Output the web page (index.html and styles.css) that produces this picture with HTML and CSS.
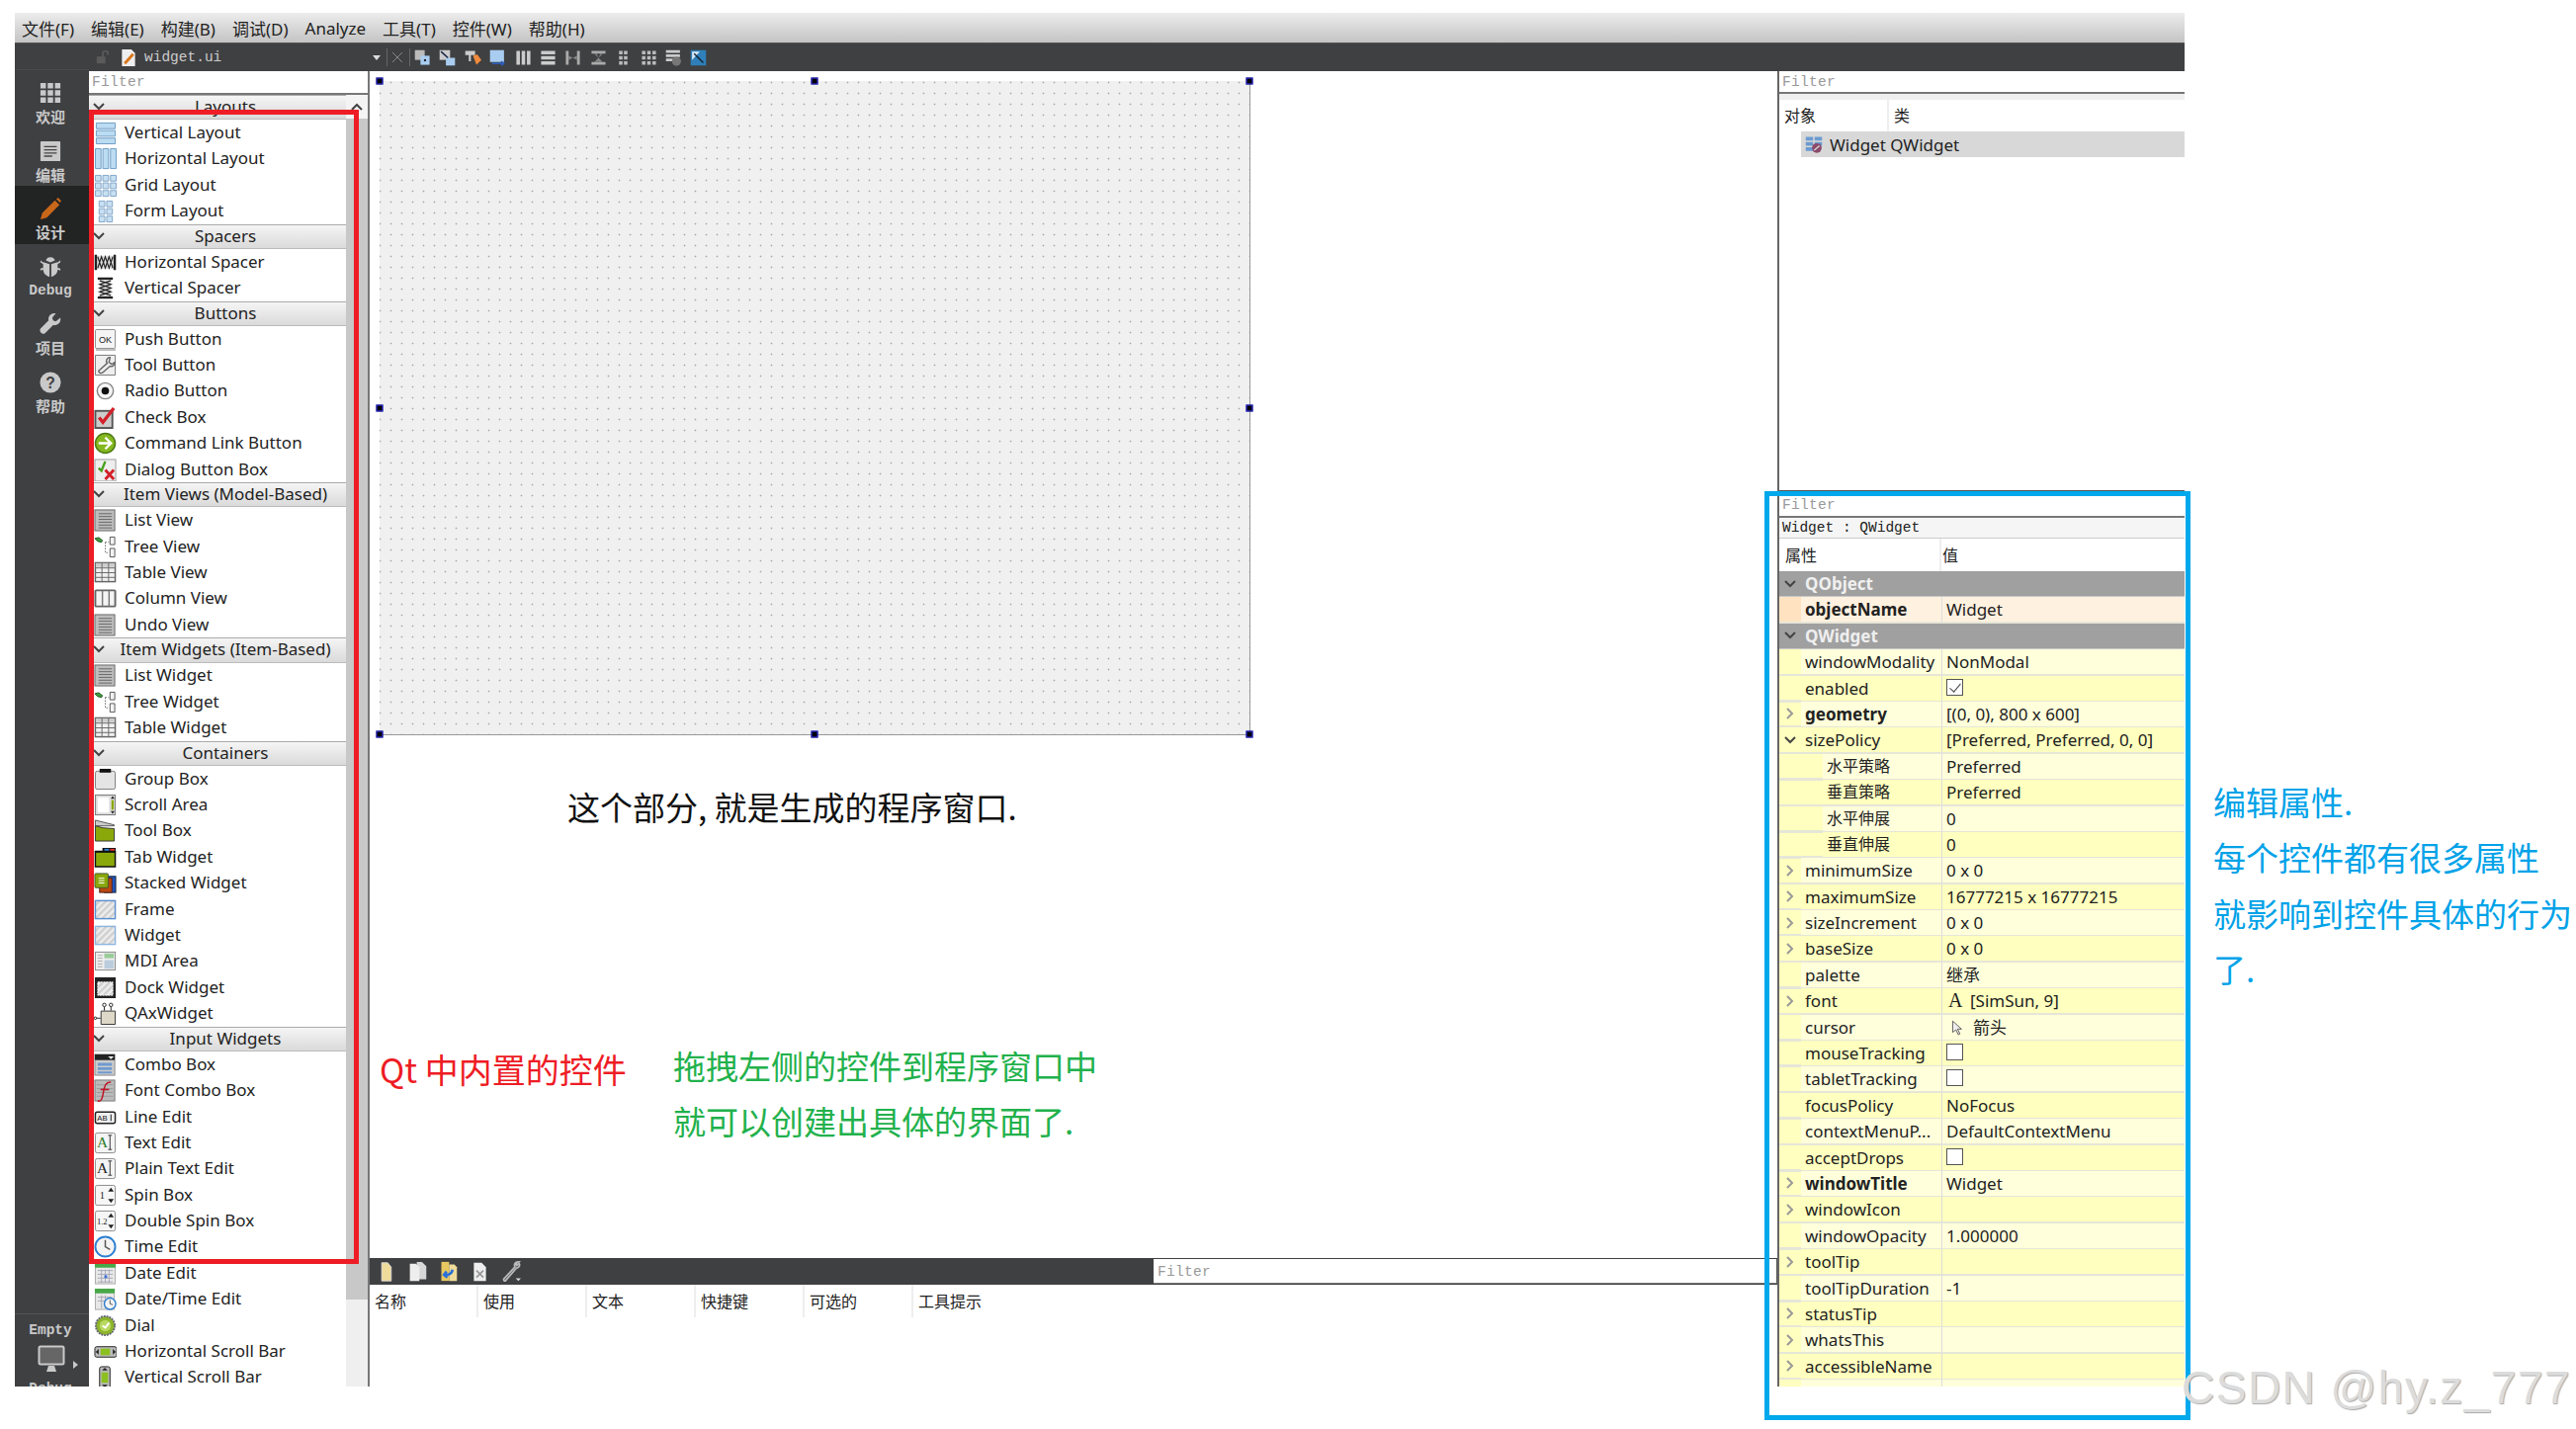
FILE: index.html
```html
<!DOCTYPE html>
<html lang="zh-CN">

<head>
    <meta charset="UTF-8">
    <title>Qt Designer widget.ui</title>
    <link rel="stylesheet" href="styles.css">
</head>

<body>
    <!-- icon sprite -->
    <svg class="sprite" xmlns="http://www.w3.org/2000/svg">
        <!-- sidebar -->
        <symbol id="s-welcome" viewBox="0 0 24 24"><path fill="#c9c9c9" d="M1 1h6v6H1zM9 1h6v6H9zM17 1h6v6h-6zM1 9h6v6H1zM9 9h6v6H9zM17 9h6v6h-6zM1 17h6v6H1zM9 17h6v6H9zM17 17h6v6h-6z"/></symbol>
        <symbol id="s-edit" viewBox="0 0 24 24"><rect x="1" y="1" width="22" height="22" rx="1" fill="#c9c9c9"/><path stroke="#444" stroke-width="1.5" d="M5 7h14M5 10.5h14M5 14h14M5 17.5h9"/></symbol>
        <symbol id="s-design" viewBox="0 0 24 24"><path fill="#c8661a" d="M1 24l2-7L17 3l5 5L8 22zM18.500 1.500l2-1.500 3.500 3.500-1.500 2z"/></symbol>
        <symbol id="s-debug" viewBox="0 0 24 24"><path fill="#c9c9c9" d="M7 5c1-5 9-5 10 0l-5 2zM5 7l6 2v14c-4-1-7-4-7-8l-3 1v-2l3-1V9L1 7V5l3 2zM19 7l-6 2v14c4-1 7-4 7-8l3 1v-2l-3-1V9l3-2V5l-3 2z"/></symbol>
        <symbol id="s-tool" viewBox="0 0 24 24"><path fill="#c9c9c9" d="M23 5l-5 4-3-1-1-3 4-5c-5-.5-9 3-8 8L1 17c-2 3 2 7 5 5l9-9c5 1 9-3 8-8z"/></symbol>
        <symbol id="s-monitor" viewBox="0 0 28 28"><rect x="1.500" y="1.500" width="25" height="18" rx="1.500" fill="#666" stroke="#c9c9c9" stroke-width="2"/><path fill="#c9c9c9" d="M11 21h6l2 6H9z"/></symbol>
        <!-- widget box -->
        <symbol id="vlay" viewBox="0 0 24 24"><path fill="#bcdcf2" stroke="#6c9cc4" d="M2.500 1.500h20v6h-20zM2.500 9.500h20v6h-20zM2.500 17.500h20v6h-20z"/></symbol>
        <symbol id="hlay" viewBox="0 0 24 24"><path fill="#bcdcf2" stroke="#6c9cc4" d="M1.500 1.500h6v21h-6zM9.500 1.500h6v21h-6zM17.500 1.500h6v21h-6z"/></symbol>
        <symbol id="glay" viewBox="0 0 24 24"><path fill="#c9e0f2" stroke="#7fa5c8" d="M1.500 1.500h6v6h-6zM9.500 1.500h6v6h-6zM17.500 1.500h6v6h-6zM1.500 9.500h6v6h-6zM9.500 9.500h6v6h-6zM17.500 9.500h6v6h-6zM1.500 17.500h6v6h-6zM9.500 17.500h6v6h-6zM17.500 17.500h6v6h-6z"/></symbol>
        <symbol id="flay" viewBox="0 0 24 24"><path fill="#c9e0f2" stroke="#7fa5c8" d="M5.500 1.500h6v6h-6zM13.500 1.500h6v6h-6zM5.500 9.500h6v6h-6zM13.500 9.500h6v6h-6zM5.500 17.500h6v6h-6zM13.500 17.500h6v6h-6z"/></symbol>
        <symbol id="hspc" viewBox="0 0 24 24"><path fill="#aaa" d="M3 5h18v14H3z" opacity=".4"/><path fill="none" stroke="#222" stroke-width="2.500" d="M2 4v16M22 4v16"/><path fill="none" stroke="#222" stroke-width="1.200" d="M4 6l4 12 4-12 4 12 4-12M4 18l4-12 4 12 4-12 4 12"/></symbol>
        <symbol id="vspc" viewBox="0 0 24 24"><path fill="#aaa" d="M6 3h12v18H6z" opacity=".4"/><path fill="none" stroke="#222" stroke-width="2.500" d="M4 2h16M4 22h16"/><path fill="none" stroke="#222" stroke-width="1.200" d="M6 4l12 4-12 4 12 4-12 4M18 4L6 8l12 4-12 4 12 4"/></symbol>
        <symbol id="tbtn" viewBox="0 0 24 24"><path fill="#eee" stroke="#777" d="M1.500 1.500h21v21h-21z"/><path fill="none" stroke="#666" stroke-width="1.500" d="M17 4c-3 0-5 3-3 6L5 18c0 2 2 3 4 2l8-7c3 1 5-1 5-4l-3 2-3-2z"/></symbol>
        <symbol id="radio" viewBox="0 0 24 24"><circle cx="12" cy="12" r="8.500" fill="#f6f6f6" stroke="#888" stroke-width="1.500"/><circle cx="12" cy="12" r="4" fill="#111"/></symbol>
        <symbol id="chk" viewBox="0 0 24 24"><rect x="1.500" y="5" width="18" height="18" fill="#ccc" stroke="#555" stroke-width="2"/><path fill="none" stroke="#d3202a" stroke-width="3.500" d="M5.500 12l4 5L21 2"/></symbol>
        <symbol id="cmd" viewBox="0 0 24 24"><circle cx="12" cy="12" r="10.500" fill="#84b821" stroke="#4d7a14" stroke-width="1.500"/><path fill="none" stroke="#fff" stroke-width="2.500" d="M5 12h13M12 6l6 6-6 6"/></symbol>
        <symbol id="dlg" viewBox="0 0 24 24"><rect x="1" y="1" width="22" height="23" fill="#eee" stroke="#999"/><path fill="none" stroke="#48a020" stroke-width="2.500" d="M5 10l3 3 4-10"/><path fill="none" stroke="#d3202a" stroke-width="3" d="M12 12l9 10M21 12l-9 10"/></symbol>
        <symbol id="list" viewBox="0 0 24 24"><rect x="1" y="1" width="21" height="22" fill="#bdbdbd" stroke="#666"/><path stroke="#666" d="M5 5h14M5 8h14M5 11h14M5 14h14M5 17h14M5 20h14"/></symbol>
        <symbol id="tree" viewBox="0 0 24 24"><path fill="#3fa03f" stroke="#225522" d="M1 3l4-1 4 3-1 2-4-1z"/><path fill="none" stroke="#666" stroke-dasharray="1.500 1.500" d="M12 7v11h4M12 7h4"/><path fill="#f4f4f4" stroke="#555" d="M17 1.500h5v8h-5zM17 13.500h5v9h-5z"/></symbol>
        <symbol id="tbl" viewBox="0 0 24 24"><rect x="1.500" y="1.500" width="21" height="20" fill="#f0f0f0" stroke="#666" stroke-width="1.500"/><path fill="#ccc" d="M2 2h20v4H2z"/><path stroke="#666" d="M2 7h20M2 12h20M2 17h20M8.500 2v20M15.500 2v20"/></symbol>
        <symbol id="col" viewBox="0 0 24 24"><rect x="1.500" y="3.500" width="21" height="17" rx="1" fill="#f4f4f4" stroke="#666" stroke-width="2"/><path stroke="#777" stroke-width="1.500" d="M9 4v16M16 4v16"/></symbol>
        <symbol id="group" viewBox="0 0 24 24"><rect x="1.500" y="3.500" width="21" height="19" rx="2" fill="#e4e4e4" stroke="#777"/><path fill="#111" d="M6 1h12v4H6z"/></symbol>
        <symbol id="scroll" viewBox="0 0 24 24"><rect x="1.500" y="1.500" width="21" height="21" fill="#ddd" stroke="#777"/><path fill="#fff" d="M4 4h12v16H4z"/><path fill="#8aa80a" d="M18.500 7h2.500v10h-2.500z"/><path fill="#222" d="M19.800 2.500l2 3h-4zM19.800 21.500l2-3h-4z"/></symbol>
        <symbol id="tbox" viewBox="0 0 24 24"><path fill="#ccc" stroke="#555" d="M1.500 1v6h20V6z"/><path fill="#8aa80a" stroke="#333" d="M1.500 7l8 2 12 1v13h-20z"/></symbol>
        <symbol id="tabw" viewBox="0 0 24 24"><path fill="#8aa80a" stroke="#111" stroke-width="1.500" d="M1.500 6h21v16h-21z"/><path fill="#111" d="M1 5h8V2h14v5H1z"/><path fill="#2f86d8" d="M11 3h5v2h-5z"/><path fill="#d33" d="M17 3h5v2h-5z"/></symbol>
        <symbol id="stack" viewBox="0 0 24 24"><rect x="11" y="5" width="12" height="17" fill="#1f55c0" stroke="#123"/><rect x="6" y="7" width="13" height="15" fill="#b8480e" stroke="#522"/><rect x="1" y="2" width="14" height="15" rx="1" fill="#8aa80a" stroke="#453"/><path stroke="#fff" d="M5 7h6M5 9.500h6M5 12h6"/></symbol>
        <pattern id="hatch" width="5" height="5" patternUnits="userSpaceOnUse" patternTransform="rotate(45)"><rect width="5" height="5" fill="#eee"/><rect width="2.500" height="5" fill="#cfcfcf"/></pattern>
        <symbol id="frame" viewBox="0 0 24 24"><rect x="1.500" y="2.500" width="21" height="19" fill="url(#hatch)" stroke="#5b8fd0" stroke-width="1.500"/></symbol>
        <symbol id="wdgt" viewBox="0 0 24 24"><rect x="1.500" y="2.500" width="21" height="19" fill="url(#hatch)" stroke="#8fb4e0" stroke-width="1.500"/></symbol>
        <symbol id="mdi" viewBox="0 0 24 24"><rect x="1.500" y="2.500" width="21" height="19" fill="#eee" stroke="#888"/><path fill="#9c9" d="M11 4h10v5H11z"/><path fill="#bcd" d="M11 11h10v9H11z"/><path stroke="#aaa" d="M4 6h5M4 9h5M4 12h5M4 15h5M4 18h5"/></symbol>
        <symbol id="dock" viewBox="0 0 24 24"><rect x="1" y="1" width="22" height="22" fill="#222"/><rect x="4" y="6" width="16" height="14" fill="url(#hatch)" stroke="#fff" stroke-dasharray="2 1"/></symbol>
        <symbol id="qax" viewBox="0 0 24 24"><path fill="#ddd8c8" stroke="#333" d="M7.500 9.500h15v14h-15z"/><path fill="none" stroke="#222" d="M11 9V5M18 9V5M1 17h6"/><circle cx="11" cy="3" r="1.800" fill="#fff" stroke="#222"/><circle cx="18" cy="3" r="1.800" fill="#fff" stroke="#222"/><circle cx="1.500" cy="17" r="1.300" fill="#fff" stroke="#222"/></symbol>
        <symbol id="combo" viewBox="0 0 24 24"><rect x="1" y="1" width="21" height="22" fill="#ccc" stroke="#888"/><path fill="#222" d="M1 1h21v6H1z"/><path fill="#fff" d="M15 3h6l-3 3z"/><path fill="#6f9ad0" d="M4 10h15v3H4zM4 14.500h15v3H4zM4 19h15v2H4z"/></symbol>
        <symbol id="fcombo" viewBox="0 0 24 24"><rect x="1" y="1" width="21" height="22" fill="#bbb" stroke="#777"/><path stroke="#999" d="M3 6h17M3 10h17M3 14h17M3 18h17"/><path fill="none" stroke="#c01020" stroke-width="1.500" d="M4 23c4 1 5-3 6-9s2-11 8-11M7 11h9"/></symbol>
        <symbol id="time" viewBox="0 0 24 24"><circle cx="12" cy="12" r="10.500" fill="#f4f4f4" stroke="#2f7fd0" stroke-width="2"/><path fill="none" stroke="#555" stroke-width="1.500" d="M12 5v7l5 3"/></symbol>
        <symbol id="date" viewBox="0 0 24 24"><rect x="1.500" y="2" width="21" height="21" fill="#e8e8e8" stroke="#aaa"/><path fill="#48a848" d="M1 1h22v5H1z"/><path stroke="#a8a8b8" d="M4 9h16M4 13h16M4 17h16M4 21h16M8 8v14M12 8v14M16 8v14"/><path fill="#3a6fd8" d="M11 14h3v3h-3z"/></symbol>
        <symbol id="dtime" viewBox="0 0 24 24"><rect x="1.500" y="2" width="20" height="21" fill="#e8e8e8" stroke="#aaa"/><path fill="#48a848" d="M1 1h21v5H1z"/><path stroke="#a8a8b8" d="M4 10h15M4 14h15M8 8v14M12 8v14"/><circle cx="17" cy="17" r="6" fill="#f4f4f4" stroke="#2f7fd0" stroke-width="1.500"/><path fill="none" stroke="#555" d="M17 13v4l3 1"/></symbol>
        <symbol id="dial" viewBox="0 0 24 24"><circle cx="12" cy="12" r="10" fill="#8db52a" stroke="#667" stroke-width="2" stroke-dasharray="2 1"/><circle cx="12" cy="12" r="6" fill="#b8d860"/><path fill="none" stroke="#fff" stroke-width="2" d="M9 12l3 2 4-5"/></symbol>
        <symbol id="hsb" viewBox="0 0 24 24"><rect x="1" y="7" width="23" height="11" rx="2" fill="#bbb" stroke="#222"/><path fill="#8cc020" d="M7 9h10v7H7z"/><path fill="#222" d="M2 12.500l3-3v6zM23 12.500l-3-3v6z"/></symbol>
        <symbol id="vsb" viewBox="0 0 24 24"><rect x="6" y="1" width="11" height="23" rx="2" fill="#bbb" stroke="#222"/><path fill="#8cc020" d="M8 7h7v11H8z"/><path fill="#222" d="M11.500 2l3 3h-6zM11.500 23l3-3h-6z"/></symbol>
        <!-- toolbar -->
        <symbol id="t-a" viewBox="0 0 24 24"><path fill="#bbb" d="M1 1h14v14H1z"/><path fill="#a8cdf0" d="M9 9h13v13H9z"/><path fill="#223" d="M14 14h3v3h-3z"/></symbol>
        <symbol id="t-b" viewBox="0 0 24 24"><path fill="#ccc" d="M1 1h15v14H1z"/><path fill="#a8cdf0" d="M10 12h13v11H10z"/><path stroke="#124" stroke-width="2" d="M3 3l10 9"/></symbol>
        <symbol id="t-c" viewBox="0 0 24 24"><path fill="#ccc" d="M1 2h14v6H9v9H6V8H1z"/><path fill="#f08a3c" d="M12 9l6-2 6 8-7 7z"/></symbol>
        <symbol id="t-d" viewBox="0 0 24 24"><path fill="#a8cdf0" d="M1 1h20v17H1z"/><path fill="none" stroke="#2a60c0" stroke-width="2" d="M4 20h16M17 17l4 3-4 3"/></symbol>
        <symbol id="t-e" viewBox="0 0 24 24"><path fill="#ccc" d="M2 2h5v20H2zM9.500 2h5v20h-5zM17 2h5v20h-5z"/></symbol>
        <symbol id="t-f" viewBox="0 0 24 24"><path fill="#ccc" d="M2 2h20v5H2zM2 9.500h20v5H2zM2 17h20v5H2z"/></symbol>
        <symbol id="t-g" viewBox="0 0 24 24"><path fill="#aaa" d="M2 2h4v20H2zM18 2h4v20h-4z"/><path fill="#888" d="M6 9l6 3 6-3v6l-6-3-6 3z"/></symbol>
        <symbol id="t-h" viewBox="0 0 24 24"><path fill="#aaa" d="M2 2h20v4H2zM2 18h20v4H2z"/><path fill="#888" d="M9 6l3 6 3-6h3l-6 6 6 6H6l6-6-6-6z"/></symbol>
        <symbol id="t-i" viewBox="0 0 24 24"><path fill="#bbb" d="M6 2h5v5H6zM13 2h5v5h-5zM6 9.500h5v5H6zM13 9.500h5v5h-5zM6 17h5v5H6zM13 17h5v5h-5z"/></symbol>
        <symbol id="t-j" viewBox="0 0 24 24"><path fill="#bbb" d="M2 2h5v5H2zM9.500 2h5v5h-5zM17 2h5v5h-5zM2 9.500h5v5H2zM9.500 9.500h5v5h-5zM17 9.500h5v5h-5zM2 17h5v5H2zM9.500 17h5v5h-5zM17 17h5v5h-5z"/></symbol>
        <symbol id="t-k" viewBox="0 0 24 24"><path fill="#ccc" d="M1 1h20v4H1zM1 7h20v4H1zM1 13h12v4H1z"/><circle cx="16" cy="17" r="6.500" fill="#777"/></symbol>
        <symbol id="t-l" viewBox="0 0 24 24"><path fill="#2f7fb8" d="M1 1h22v22H1z"/><path fill="#d8e8f4" d="M3 3h11L3 15z"/><path stroke="#123" stroke-width="2" d="M6 6l13 13"/></symbol>
        <!-- action editor -->
        <symbol id="a-new" viewBox="0 0 24 24"><path fill="#f0dc9a" stroke="#ddd" d="M7 2h7l4 5v16H7z"/></symbol>
        <symbol id="a-copy" viewBox="0 0 24 24"><path fill="#d8d8d8" d="M11 1h6l5 5v15H11z"/><path fill="#eee" d="M3 3h7l4 4v16H3z"/></symbol>
        <symbol id="a-paste" viewBox="0 0 24 24"><path fill="#e8c860" d="M4 1h9v22H4z"/><path fill="#f0dc9a" d="M13 4h6l3 3v16h-9z"/><path fill="none" stroke="#2a70d8" stroke-width="3" d="M17 10c-1 5-5 6-8 6M10 12l-3 4 4 3"/></symbol>
        <symbol id="a-del" viewBox="0 0 24 24"><path fill="#eee" d="M5 2h9l5 5v16H5z"/><path stroke="#999" stroke-width="2" d="M8 11l8 8M16 11l-8 8"/></symbol>
        <symbol id="a-wrench" viewBox="0 0 24 24"><path fill="none" stroke="#bbb" stroke-width="2" d="M21 1c-4 0-5 3-4 6L4 21c0 2 1 2 2 2L19 8c3 0 4-3 3-5l-3 2-1-2z"/><path fill="#ddd" d="M18 20h6l-3 3z"/></symbol>
        <symbol id="o-widget" viewBox="0 0 24 24"><path fill="#6b9bd1" d="M1 2h10v5H1zM13 2h10v5H13zM1 9h10v5H1zM13 9h10v5H13zM1 16h10v5H1z"/><circle cx="16" cy="17" r="6.500" fill="#8b4a6b"/><path stroke="#ddd" stroke-width="1.500" d="M12.500 20l7-6"/></symbol>
        <symbol id="cv" viewBox="0 0 12 12"><path fill="none" stroke="#444" stroke-width="2" d="M1 3l5 5 5-5"/></symbol>
        <symbol id="cr" viewBox="0 0 12 12"><path fill="none" stroke="#999" stroke-width="2" d="M3 1l5 5-5 5"/></symbol>
        <symbol id="cu" viewBox="0 0 12 12"><path fill="none" stroke="#444" stroke-width="2" d="M1 9l5-5 5 5"/></symbol>
        <symbol id="cursor" viewBox="0 0 16 20"><path fill="#eee" stroke="#444" d="M3 1v14l4-3 3 6 2-1-3-6h5z"/></symbol>
    </svg>

    <div class="page">
        <div class="app">
            <div class="menubar">
                <span>文件(F)</span>
                <span>编辑(E)</span>
                <span>构建(B)</span>
                <span>调试(D)</span>
                <span>Analyze</span>
                <span>工具(T)</span>
                <span>控件(W)</span>
                <span>帮助(H)</span>
            </div>

            <div class="app_body">
                <div class="sidebar">
                    <div class="side_top"></div>
                    <div class="side_item"><svg class="side_ico"><use href="#s-welcome"/></svg>欢迎</div>
                    <div class="side_item"><svg class="side_ico"><use href="#s-edit"/></svg>编辑</div>
                    <div class="side_item on"><svg class="side_ico"><use href="#s-design"/></svg>设计</div>
                    <div class="side_item"><svg class="side_ico"><use href="#s-debug"/></svg><b>Debug</b></div>
                    <div class="side_item"><svg class="side_ico"><use href="#s-tool"/></svg>项目</div>
                    <div class="side_item"><svg class="side_ico" viewBox="0 0 24 24"><circle cx="12" cy="12" r="11.500" fill="#c9c9c9"/><text x="12" y="18" text-anchor="middle" font-family="Liberation Sans" font-weight="700" font-size="17" fill="#3f4042">?</text></svg>帮助</div>
                    <div class="side_kit">
                        <b>Empty</b>
                        <div class="kit_icon"><svg class="kit_monitor"><use href="#s-monitor"/></svg><i class="kit_arrow"></i></div>
                        <b>Debug</b>
                    </div>
                </div>

                <div class="workspace">
                    <div class="doc_bar">
                        <svg class="lock" viewBox="0 0 16 16"><path fill="#5a5a5a" d="M1 7h10v8H1z"/><path fill="none" stroke="#5a5a5a" stroke-width="2" d="M8 7V3c0-3 6-3 6 0v2"/></svg>
                        <svg class="doc_file" viewBox="0 0 16 20"><path fill="#eee" d="M1 1h10l4 4v14H1z"/><path stroke="#d8761c" stroke-width="3" d="M4 16L13 6"/></svg>
                        <span class="doc_name">widget.ui</span>
                        <i class="doc_drop"></i>
                        <i class="doc_sep"></i>
                        <svg class="doc_close" viewBox="0 0 12 12"><path stroke="#888" d="M1 1l10 10M11 1L1 11"/></svg>
                        <i class="doc_sep"></i>
                        <div class="doc_tools">
                            <svg><use href="#t-a"/></svg>
                            <svg><use href="#t-b"/></svg>
                            <svg><use href="#t-c"/></svg>
                            <svg><use href="#t-d"/></svg>
                            <svg><use href="#t-e"/></svg>
                            <svg><use href="#t-f"/></svg>
                            <svg><use href="#t-g"/></svg>
                            <svg><use href="#t-h"/></svg>
                            <svg><use href="#t-i"/></svg>
                            <svg><use href="#t-j"/></svg>
                            <svg><use href="#t-k"/></svg>
                            <svg><use href="#t-l"/></svg>
                        </div>
                    </div>

                    <div class="panels">
                        <div class="widget_box">
                            <div class="filter box_filter">Filter</div>
                            <div class="box_body">
                                <div class="box_list">
                                    <div class="cat first"><svg class="cat_arrow"><use href="#cv"/></svg>Layouts</div>
                                    <div class="tool"><svg class="ico"><use href="#vlay"/></svg>Vertical Layout</div>
                                    <div class="tool"><svg class="ico"><use href="#hlay"/></svg>Horizontal Layout</div>
                                    <div class="tool"><svg class="ico"><use href="#glay"/></svg>Grid Layout</div>
                                    <div class="tool"><svg class="ico"><use href="#flay"/></svg>Form Layout</div>
                                    <div class="cat"><svg class="cat_arrow"><use href="#cv"/></svg>Spacers</div>
                                    <div class="tool"><svg class="ico"><use href="#hspc"/></svg>Horizontal Spacer</div>
                                    <div class="tool"><svg class="ico"><use href="#vspc"/></svg>Vertical Spacer</div>
                                    <div class="cat"><svg class="cat_arrow"><use href="#cv"/></svg>Buttons</div>
                                    <div class="tool"><svg class="ico" viewBox="0 0 24 24"><rect x="1.500" y="1.500" width="21" height="20" rx="1.500" fill="#f4f4f4" stroke="#888"/><path stroke="#bbb" stroke-width="2" d="M2 23h21"/><text x="12" y="15.500" text-anchor="middle" font-family="Liberation Sans" font-size="9.500" fill="#222">OK</text></svg>Push Button</div>
                                    <div class="tool"><svg class="ico"><use href="#tbtn"/></svg>Tool Button</div>
                                    <div class="tool"><svg class="ico"><use href="#radio"/></svg>Radio Button</div>
                                    <div class="tool"><svg class="ico"><use href="#chk"/></svg>Check Box</div>
                                    <div class="tool"><svg class="ico"><use href="#cmd"/></svg>Command Link Button</div>
                                    <div class="tool"><svg class="ico"><use href="#dlg"/></svg>Dialog Button Box</div>
                                    <div class="cat"><svg class="cat_arrow"><use href="#cv"/></svg>Item Views (Model-Based)</div>
                                    <div class="tool"><svg class="ico"><use href="#list"/></svg>List View</div>
                                    <div class="tool"><svg class="ico"><use href="#tree"/></svg>Tree View</div>
                                    <div class="tool"><svg class="ico"><use href="#tbl"/></svg>Table View</div>
                                    <div class="tool"><svg class="ico"><use href="#col"/></svg>Column View</div>
                                    <div class="tool"><svg class="ico"><use href="#list"/></svg>Undo View</div>
                                    <div class="cat"><svg class="cat_arrow"><use href="#cv"/></svg>Item Widgets (Item-Based)</div>
                                    <div class="tool"><svg class="ico"><use href="#list"/></svg>List Widget</div>
                                    <div class="tool"><svg class="ico"><use href="#tree"/></svg>Tree Widget</div>
                                    <div class="tool"><svg class="ico"><use href="#tbl"/></svg>Table Widget</div>
                                    <div class="cat"><svg class="cat_arrow"><use href="#cv"/></svg>Containers</div>
                                    <div class="tool"><svg class="ico"><use href="#group"/></svg>Group Box</div>
                                    <div class="tool"><svg class="ico"><use href="#scroll"/></svg>Scroll Area</div>
                                    <div class="tool"><svg class="ico"><use href="#tbox"/></svg>Tool Box</div>
                                    <div class="tool"><svg class="ico"><use href="#tabw"/></svg>Tab Widget</div>
                                    <div class="tool"><svg class="ico"><use href="#stack"/></svg>Stacked Widget</div>
                                    <div class="tool"><svg class="ico"><use href="#frame"/></svg>Frame</div>
                                    <div class="tool"><svg class="ico"><use href="#wdgt"/></svg>Widget</div>
                                    <div class="tool"><svg class="ico"><use href="#mdi"/></svg>MDI Area</div>
                                    <div class="tool"><svg class="ico"><use href="#dock"/></svg>Dock Widget</div>
                                    <div class="tool"><svg class="ico"><use href="#qax"/></svg>QAxWidget</div>
                                    <div class="cat"><svg class="cat_arrow"><use href="#cv"/></svg>Input Widgets</div>
                                    <div class="tool"><svg class="ico"><use href="#combo"/></svg>Combo Box</div>
                                    <div class="tool"><svg class="ico"><use href="#fcombo"/></svg>Font Combo Box</div>
                                    <div class="tool"><svg class="ico" viewBox="0 0 24 24"><rect x="1.500" y="6.500" width="21" height="12" rx="2" fill="#eee" stroke="#222" stroke-width="1.500"/><text x="3.500" y="15.500" font-family="Liberation Sans" font-size="8" fill="#111">AB</text><path stroke="#111" d="M18 9v7"/></svg>Line Edit</div>
                                    <div class="tool"><svg class="ico" viewBox="0 0 24 24"><rect x="1.500" y="1.500" width="21" height="21" rx="2" fill="#f4f4f4" stroke="#888"/><text x="3" y="17" font-family="Liberation Serif" font-size="16" fill="#2b7a2b">A</text><path stroke="#333" d="M17 4v15M15 4h4M15 19h4"/></svg>Text Edit</div>
                                    <div class="tool"><svg class="ico" viewBox="0 0 24 24"><rect x="1.500" y="1.500" width="21" height="21" rx="2" fill="#f4f4f4" stroke="#888"/><text x="3" y="17" font-family="Liberation Serif" font-size="16" fill="#222">A</text><path stroke="#333" d="M17 4v15M15 4h4M15 19h4"/></svg>Plain Text Edit</div>
                                    <div class="tool"><svg class="ico" viewBox="0 0 24 24"><rect x="1.500" y="1.500" width="21" height="21" rx="2" fill="#f6f6f6" stroke="#888"/><text x="6" y="16" font-family="Liberation Serif" font-size="11" fill="#222">1</text><path fill="#222" d="M18 4l3 4h-6zM18 20l3-4h-6z"/></svg>Spin Box</div>
                                    <div class="tool"><svg class="ico" viewBox="0 0 24 24"><rect x="1.500" y="1.500" width="21" height="21" rx="2" fill="#f6f6f6" stroke="#888"/><text x="3" y="16" font-family="Liberation Serif" font-size="9" fill="#222">1.2</text><path fill="#222" d="M18 4l3 4h-6zM18 20l3-4h-6z"/></svg>Double Spin Box</div>
                                    <div class="tool"><svg class="ico"><use href="#time"/></svg>Time Edit</div>
                                    <div class="tool"><svg class="ico"><use href="#date"/></svg>Date Edit</div>
                                    <div class="tool"><svg class="ico"><use href="#dtime"/></svg>Date/Time Edit</div>
                                    <div class="tool"><svg class="ico"><use href="#dial"/></svg>Dial</div>
                                    <div class="tool"><svg class="ico"><use href="#hsb"/></svg>Horizontal Scroll Bar</div>
                                    <div class="tool"><svg class="ico"><use href="#vsb"/></svg>Vertical Scroll Bar</div>
                                </div>
                                <div class="box_scroll">
                                    <div class="scroll_up"><svg><use href="#cu"/></svg></div>
                                    <div class="scroll_thumb"></div>
                                </div>
                            </div>
                        </div>

                        <div class="center">
                            <div class="design">
                                <div class="form">
                                    <i class="handle h_tl"></i><i class="handle h_tc"></i><i class="handle h_tr"></i>
                                    <i class="handle h_ml"></i><i class="handle h_mr"></i>
                                    <i class="handle h_bl"></i><i class="handle h_bc"></i><i class="handle h_br"></i>
                                </div>
                                <p class="caption">这个部分, 就是生成的程序窗口.</p>
                                <div class="notes">
                                    <p class="note_red">Qt 中内置的控件</p>
                                    <div class="note_green">
                                        <p>拖拽左侧的控件到程序窗口中</p>
                                        <p>就可以创建出具体的界面了.</p>
                                    </div>
                                </div>
                            </div>

                            <div class="actions">
                                <div class="action_bar">
                                    <div class="action_tools">
                                        <svg><use href="#a-new"/></svg>
                                        <svg><use href="#a-copy"/></svg>
                                        <svg><use href="#a-paste"/></svg>
                                        <svg><use href="#a-del"/></svg>
                                        <svg><use href="#a-wrench"/></svg>
                                    </div>
                                    <div class="filter action_filter">Filter</div>
                                </div>
                                <div class="action_head">
                                    <div>名称</div>
                                    <div>使用</div>
                                    <div>文本</div>
                                    <div>快捷键</div>
                                    <div>可选的</div>
                                    <div>工具提示</div>
                                </div>
                            </div>
                        </div>

                        <div class="right">
                            <div class="inspector">
                                <div class="filter">Filter</div>
                                <div class="ins_strip"></div>
                                <div class="ins_head"><div>对象</div><div>类</div></div>
                                <div class="ins_row"><svg class="ins_ico"><use href="#o-widget"/></svg><span>Widget QWidget</span></div>
                            </div>

                            <div class="props">
                                <div class="filter">Filter</div>
                                <div class="prop_title">Widget : QWidget</div>
                                <div class="prop_head"><div>属性</div><div>值</div></div>
                                <div class="prop_rows">
                                    <div class="prow group"><svg class="arrow"><use href="#cv"/></svg><div>QObject</div></div>
                                    <div class="prow name_row"><i></i><div class="pname bold">objectName</div><div class="pval">Widget</div></div>
                                    <div class="prow group"><svg class="arrow"><use href="#cv"/></svg><div>QWidget</div></div>
                                    <div class="prow"><i></i><div class="pname">windowModality</div><div class="pval">NonModal</div></div>
                                    <div class="prow"><i></i><div class="pname">enabled</div><div class="pval"><span class="cbox checked"></span></div></div>
                                    <div class="prow"><svg class="arrow"><use href="#cr"/></svg><div class="pname bold">geometry</div><div class="pval">[(0, 0), 800 x 600]</div></div>
                                    <div class="prow"><svg class="arrow"><use href="#cv"/></svg><div class="pname">sizePolicy</div><div class="pval">[Preferred, Preferred, 0, 0]</div></div>
                                    <div class="prow sub"><i></i><div class="pname">水平策略</div><div class="pval">Preferred</div></div>
                                    <div class="prow sub"><i></i><div class="pname">垂直策略</div><div class="pval">Preferred</div></div>
                                    <div class="prow sub"><i></i><div class="pname">水平伸展</div><div class="pval">0</div></div>
                                    <div class="prow sub"><i></i><div class="pname">垂直伸展</div><div class="pval">0</div></div>
                                    <div class="prow"><svg class="arrow"><use href="#cr"/></svg><div class="pname">minimumSize</div><div class="pval">0 x 0</div></div>
                                    <div class="prow"><svg class="arrow"><use href="#cr"/></svg><div class="pname">maximumSize</div><div class="pval">16777215 x 16777215</div></div>
                                    <div class="prow"><svg class="arrow"><use href="#cr"/></svg><div class="pname">sizeIncrement</div><div class="pval">0 x 0</div></div>
                                    <div class="prow"><svg class="arrow"><use href="#cr"/></svg><div class="pname">baseSize</div><div class="pval">0 x 0</div></div>
                                    <div class="prow"><i></i><div class="pname">palette</div><div class="pval">继承</div></div>
                                    <div class="prow"><svg class="arrow"><use href="#cr"/></svg><div class="pname">font</div><div class="pval"><span class="font_a">A</span>[SimSun, 9]</div></div>
                                    <div class="prow"><i></i><div class="pname">cursor</div><div class="pval"><svg class="cur_ico"><use href="#cursor"/></svg>箭头</div></div>
                                    <div class="prow"><i></i><div class="pname">mouseTracking</div><div class="pval"><span class="cbox"></span></div></div>
                                    <div class="prow"><i></i><div class="pname">tabletTracking</div><div class="pval"><span class="cbox"></span></div></div>
                                    <div class="prow"><i></i><div class="pname">focusPolicy</div><div class="pval">NoFocus</div></div>
                                    <div class="prow"><i></i><div class="pname">contextMenuP...</div><div class="pval">DefaultContextMenu</div></div>
                                    <div class="prow"><i></i><div class="pname">acceptDrops</div><div class="pval"><span class="cbox"></span></div></div>
                                    <div class="prow"><svg class="arrow"><use href="#cr"/></svg><div class="pname bold">windowTitle</div><div class="pval">Widget</div></div>
                                    <div class="prow"><svg class="arrow"><use href="#cr"/></svg><div class="pname">windowIcon</div><div class="pval"></div></div>
                                    <div class="prow"><i></i><div class="pname">windowOpacity</div><div class="pval">1.000000</div></div>
                                    <div class="prow"><svg class="arrow"><use href="#cr"/></svg><div class="pname">toolTip</div><div class="pval"></div></div>
                                    <div class="prow"><i></i><div class="pname">toolTipDuration</div><div class="pval">-1</div></div>
                                    <div class="prow"><svg class="arrow"><use href="#cr"/></svg><div class="pname">statusTip</div><div class="pval"></div></div>
                                    <div class="prow"><svg class="arrow"><use href="#cr"/></svg><div class="pname">whatsThis</div><div class="pval"></div></div>
                                    <div class="prow"><svg class="arrow"><use href="#cr"/></svg><div class="pname">accessibleName</div><div class="pval"></div></div>
                                    <div class="prow"><svg class="arrow"><use href="#cr"/></svg><div class="pname">accessibleD...</div><div class="pval"></div></div>
                                </div>
                            </div>
                        </div>
                    </div>
                </div>
            </div>
        </div>

        <div class="side_note">
            <p>编辑属性.</p>
            <p>每个控件都有很多属性</p>
            <p>就影响到控件具体的行为</p>
            <p>了.</p>
        </div>

        <!-- 标注框 -->
        <div class="mark_red"></div>
        <div class="mark_blue"></div>
        <div class="watermark">CSDN @hy.z_777</div>
    </div>
</body>

</html>
```

FILE: styles.css
```css
* {
    margin: 0;
    padding: 0;
    box-sizing: border-box;
}

html,
body {
    height: 100%;
    background: #fff;
    overflow: hidden;
}

body {
    font-family: "Noto Sans", "Noto Sans CJK SC", sans-serif;
    font-size: 17px;
    color: #222;
}

i {
    display: block;
}

.sprite {
    position: absolute;
    width: 0;
    height: 0;
}

.page {
    position: relative;
    display: flex;
    width: 2606px;
    height: 1446px;
    padding: 13px 0 0 15px;
}

.app {
    display: flex;
    flex-direction: column;
    flex: none;
    width: 2195px;
    height: 1390px;
    overflow: hidden;
}

/* menu */
.menubar {
    display: flex;
    flex: none;
    gap: 17px;
    align-items: center;
    height: 31px;
    padding-left: 7px;
    background: linear-gradient(#ececec, #c4c4c4);
    border-bottom: 1px solid #555;
    white-space: nowrap;
}

.app_body {
    display: flex;
    flex: 1;
    min-height: 0;
}

/* sidebar */
.sidebar {
    display: flex;
    flex: none;
    flex-direction: column;
    width: 75px;
    padding-right: 3px;
    background: #3f4042;
    color: #c9c9c9;
    font-size: 15px;
    font-weight: 700;
    overflow: hidden;
}

.side_top {
    flex: none;
    height: 27px;
    margin-right: -3px;
    border-bottom: 1px solid #4a4b4d;
}

.side_item {
    display: flex;
    flex: none;
    flex-direction: column;
    align-items: center;
    height: 58.600px;
    padding-top: 12px;
    line-height: 22px;
}

.side_item.on {
    margin-right: -3px;
    padding-right: 3px;
    background: #222323;
}

.side_ico {
    flex: none;
    width: 22px;
    height: 22px;
    margin-bottom: 2px;
}

.sidebar b {
    font-family: "Liberation Mono", monospace;
    font-size: 14.500px;
}

.side_kit {
    display: flex;
    flex-direction: column;
    align-items: center;
    margin: auto -3px 0 0;
    padding: 6px 3px 0 0;
    height: 74px;
    border-top: 1px solid #555;
    line-height: 20px;
}

.kit_icon {
    display: flex;
    align-items: flex-end;
    gap: 8px;
    height: 30px;
    margin: 5px 0 6px 14px;
}

.kit_monitor {
    width: 28px;
    height: 28px;
}

.kit_arrow {
    width: 0;
    height: 0;
    margin-bottom: 4px;
    border-left: 5px solid #c9c9c9;
    border-top: 4px solid transparent;
    border-bottom: 4px solid transparent;
}

/* workspace */
.workspace {
    display: flex;
    flex: 1;
    flex-direction: column;
    min-width: 0;
}

.doc_bar {
    display: flex;
    flex: none;
    align-items: center;
    height: 28px;
    padding-left: 7px;
    background: #3f4042;
}

.lock {
    width: 14px;
    height: 14px;
    margin-right: 11px;
}

.doc_file {
    width: 16px;
    height: 19px;
    margin-right: 8px;
}

.doc_name {
    width: 231px;
    color: #ccc;
    font-family: "Liberation Mono", monospace;
    font-size: 14.500px;
}

.doc_drop {
    width: 0;
    height: 0;
    border-top: 5px solid #ddd;
    border-left: 4px solid transparent;
    border-right: 4px solid transparent;
}

.doc_sep {
    width: 1px;
    height: 18px;
    margin-left: 6px;
    background: #666;
}

.doc_close {
    width: 12px;
    height: 12px;
    margin-left: 4px;
}

.doc_tools {
    display: flex;
    gap: 8.400px;
    margin-left: 4px;
}

.doc_tools svg {
    width: 17px;
    height: 17px;
}

.panels {
    display: flex;
    flex: 1;
    min-height: 0;
}

.filter {
    height: 23px;
    padding-left: 3px;
    background: #fff;
    border-bottom: 2px solid #777;
    color: #999;
    font-family: "Liberation Mono", monospace;
    font-size: 14.500px;
    line-height: 23px;
    letter-spacing: .3px;
}

/* widget box */
.widget_box {
    display: flex;
    flex: none;
    flex-direction: column;
    width: 282px;
    background: #fff;
}

.box_filter {
    flex: none;
    height: 24px;
}

.box_body {
    display: flex;
    flex: 1;
    min-height: 0;
}

.box_list {
    flex: 1;
    min-width: 0;
    overflow: hidden;
}

.cat {
    position: relative;
    height: 25.200px;
    padding-left: 16px;
    background: linear-gradient(#f5f5f5, #dadada);
    border-top: 1px solid #aaa;
    border-bottom: 1px solid #bbb;
    line-height: 22px;
    text-align: center;
    white-space: nowrap;
}

.cat_arrow {
    position: absolute;
    left: 4px;
    top: 5px;
    width: 12px;
    height: 12px;
}

.tool {
    display: flex;
    align-items: center;
    height: 26.400px;
    padding: 0 0 2px 5px;
    white-space: nowrap;
}

.ico {
    flex: none;
    width: 23px;
    height: 23px;
    margin: 2px 8px 0 0;
}

.box_scroll {
    flex: none;
    width: 22px;
    background: #efefef;
}

.scroll_up {
    display: flex;
    align-items: center;
    justify-content: center;
    height: 24px;
    background: #f4f4f4;
}

.scroll_up svg {
    width: 12px;
    height: 12px;
}

.scroll_thumb {
    height: 1195px;
    background: #c8c8c8;
}

/* center */
.center {
    display: flex;
    flex: 1;
    flex-direction: column;
    min-width: 0;
    background: #fff;
    border-left: 2px solid #777;
}

.design {
    flex: 1;
    padding: 10px 0 0 10px;
    min-height: 0;
}

.form {
    position: relative;
    width: 881px;
    height: 662px;
    background-color: #f0f0f0;
    background-image: radial-gradient(circle, #aaa .8px, transparent 1.1px);
    background-position: -5px -4px;
    background-size: 11px 11px;
    border-right: 1px solid #999;
    border-bottom: 1px solid #999;
}

.handle {
    position: absolute;
    width: 7px;
    height: 7px;
    background: #000;
    border: 1px solid #3333ff;
    transform: translate(-50%, -50%);
}

.h_tl { left: 0; top: 0; }
.h_tc { left: 50%; top: 0; }
.h_tr { left: 100%; top: 0; }
.h_ml { left: 0; top: 50%; }
.h_mr { left: 100%; top: 50%; }
.h_bl { left: 0; top: 100%; }
.h_bc { left: 50%; top: 100%; }
.h_br { left: 100%; top: 100%; }

.caption {
    margin: 52px 0 0 190px;
    color: #111;
    font-family: "Noto Sans CJK SC", sans-serif;
    font-size: 33px;
    line-height: 40px;
    white-space: nowrap;
}

.notes {
    display: flex;
    margin-top: 214px;
    font-family: "Noto Sans CJK SC", sans-serif;
    font-size: 33px;
    line-height: 56px;
    white-space: nowrap;
}

.note_red {
    flex: none;
    width: 297px;
    margin-top: 4px;
    color: #ee1c25;
    font-size: 34px;
}

.note_green {
    color: #22b14c;
}

.actions {
    flex: none;
    height: 130px;
}

.action_bar {
    display: flex;
    align-items: center;
    height: 27px;
    background: #3f4042;
}

.action_tools {
    display: flex;
    gap: 10.500px;
    width: 793px;
    padding-left: 6px;
}

.action_tools svg {
    width: 21px;
    height: 21px;
}

.action_filter {
    flex: 1;
    height: 25px;
    padding-left: 4px;
    border-bottom: 1px solid #777;
    border-right: 1px solid #555;
    line-height: 27px;
}

.action_head {
    display: flex;
    height: 33px;
    line-height: 35px;
    font-size: 16px;
}

.action_head div {
    width: 110px;
    padding-left: 5px;
    border-right: 2px solid #eee;
}

.action_head div:last-child {
    border: 0;
}

/* object inspector, property editor */
.right {
    display: flex;
    flex: none;
    flex-direction: column;
    width: 412px;
    background: #fff;
    border-left: 2px solid #666;
}

.inspector {
    flex: none;
    height: 424px;
}

.ins_strip {
    height: 6px;
    background: #efefef;
}

.ins_head {
    display: flex;
    height: 32px;
    font-size: 16px;
    line-height: 32px;
}

.ins_head div:first-child {
    width: 111px;
    padding-left: 5px;
    border-right: 2px solid #efefef;
}

.ins_head div:last-child {
    padding-left: 5px;
}

.ins_row {
    display: flex;
    gap: 7px;
    align-items: center;
    height: 26px;
    margin-left: 22px;
    padding-left: 4px;
    background: #d8d8d8;
}

.ins_ico {
    width: 18px;
    height: 18px;
}

.props {
    display: flex;
    flex: 1;
    flex-direction: column;
    min-height: 0;
    border-top: 2px solid #555;
    padding-top: 2px;
}

.props .filter {
    flex: none;
    height: 24px;
}

.prop_title {
    flex: none;
    height: 21px;
    padding-left: 3px;
    background: #f5f5f5;
    border-bottom: 1px solid #ccc;
    font-family: "Liberation Mono", monospace;
    font-size: 14.500px;
    line-height: 20px;
}

.prop_head {
    display: flex;
    flex: none;
    height: 33px;
    font-size: 16px;
    line-height: 35px;
}

.prop_head div:first-child {
    width: 164px;
    padding-left: 6px;
    border-right: 2px solid #efefef;
}

.prop_head div:last-child {
    padding-left: 1px;
}

.prop_rows {
    flex: 1;
    min-height: 0;
    overflow: hidden;
}

.prow {
    display: grid;
    grid-template-columns: 22px 142px 1fr;
    align-items: center;
    height: 26.400px;
    background: #ffffbf;
    border-bottom: 2px solid #e6e6d8;
    white-space: nowrap;
}

.prow > i,
.pname,
.pval {
    align-self: stretch;
    margin-bottom: -2px;
    border-bottom: 2px solid #e6e6d8;
    line-height: 25px;
}

.pname,
.pval {
    background: #ffffbf;
}

.prow:nth-child(even) .pname,
.prow:nth-child(even) .pval {
    background: #ffffdc;
}

.pname {
    padding-left: 4px;
}

.pval {
    padding-left: 4px;
    border-left: 1px solid #ddd;
}

.bold {
    font-weight: 700;
}

.arrow {
    width: 12px;
    height: 12px;
    margin-left: 5px;
}

.prow.sub {
    grid-template-columns: 44px 120px 1fr;
}

.prow.sub .pname {
    font-size: 16px;
}

.prow.group {
    grid-template-columns: 22px 1fr;
    background: #a0a0a0;
    color: #efefef;
    font-weight: 700;
    border-bottom: 1px solid #c8c8c8;
}

.prow.group div {
    padding-left: 4px;
}

.prow.name_row {
    background: #ffe2c0;
}

.prow.name_row .pname,
.prow.name_row .pval {
    background: #fff1df;
}

.cbox {
    display: block;
    position: relative;
    width: 17px;
    height: 17px;
    margin-top: 3px;
    background: #fff;
    border: 1px solid #555;
}

.cbox.checked::after {
    content: "";
    position: absolute;
    left: 5px;
    top: 1px;
    width: 5px;
    height: 10px;
    border-right: 1px solid #444;
    border-bottom: 1px solid #444;
    transform: rotate(40deg);
}

.font_a {
    display: inline-block;
    width: 24px;
    padding-left: 2px;
    font-family: "Liberation Serif", serif;
    font-size: 20px;
}

.cur_ico {
    width: 13px;
    height: 17px;
    margin: 0 10px 0 4px;
    vertical-align: -3px;
}

/* 오른쪽 설명 */
.side_note {
    flex: none;
    margin-left: 29px;
    padding-top: 770px;
    color: #00a2e8;
    font-family: "Noto Sans CJK SC", sans-serif;
    font-size: 33px;
    line-height: 56.300px;
    white-space: nowrap;
}

.mark_red,
.mark_blue {
    position: absolute;
    pointer-events: none;
}

.mark_red {
    left: 90px;
    top: 111px;
    width: 273px;
    height: 1168px;
    border: 5.500px solid #ee1c25;
}

.mark_blue {
    left: 1785px;
    top: 497px;
    width: 431px;
    height: 940px;
    border: 5.500px solid #00a8ec;
}

.watermark {
    position: absolute;
    left: 2207px;
    top: 1376px;
    color: #dcdcdc;
    font-family: "Liberation Sans", sans-serif;
    font-size: 46px;
    letter-spacing: 1.500px;
    line-height: 56px;
    text-shadow: 1px 1px 1px #aaa;
    white-space: nowrap;
}
```
